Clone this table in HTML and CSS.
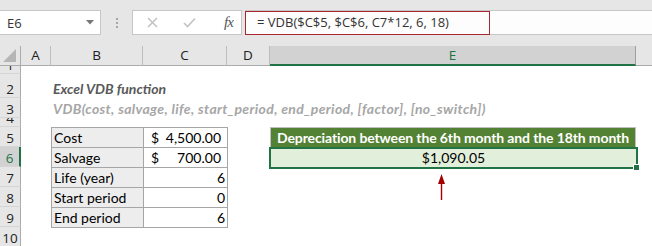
FILE: index.html
```html
<!DOCTYPE html>
<html lang="en">

<head>
    <meta charset="UTF-8" />
    <title>Excel VDB function</title>
    <link rel="stylesheet" href="styles.css">
</head>

<body>
    <div class="formula-bar">
        <div class="name-box">
            <span>E6</span>
            <svg class="caret" width="8" height="5" viewBox="0 0 8 5"><polygon points="0,0 8,0 4,4.5" /></svg>
        </div>
        <div class="grip"><i></i><i></i><i></i></div>
        <div class="fx-buttons">
            <svg class="btn-cancel" width="11" height="11" viewBox="0 0 11 11">
                <path d="M1 1 L10 10 M10 1 L1 10" />
            </svg>
            <svg class="btn-enter" width="13" height="11" viewBox="0 0 13 11">
                <path d="M1 6 L4.5 9.5 L12 1.5" />
            </svg>
            <span class="btn-fx">fx</span>
        </div>
        <div class="formula">
            <div class="formula-input">= VDB($C$5, $C$6, C7*12, 6, 18)</div>
        </div>
    </div>

    <div class="sheet">
        <div class="corner">
            <svg width="13" height="13" viewBox="0 0 13 13"><polygon points="13,0 13,13 0,13" /></svg>
        </div>

        <div class="col-heads">
            <div class="ch ch-a">A</div>
            <div class="ch ch-b">B</div>
            <div class="ch ch-c">C</div>
            <div class="ch ch-d">D</div>
            <div class="ch ch-e active">E</div>
            <div class="ch ch-rest"></div>
        </div>

        <div class="row-heads">
            <div class="rh h1">1</div>
            <div class="rh h2">2</div>
            <div class="rh">3</div>
            <div class="rh h4">4</div>
            <div class="rh">5</div>
            <div class="rh active">6</div>
            <div class="rh">7</div>
            <div class="rh">8</div>
            <div class="rh">9</div>
            <div class="rh">10</div>
        </div>

        <div class="cells">
            <div class="heading">Excel VDB function</div>
            <div class="syntax">VDB(cost, salvage, life, start_period, end_period, [factor], [no_switch])</div>

            <div class="inputs">
                <div class="label">Cost</div>
                <div class="money"><span>$</span><span>4,500.00</span></div>
                <div class="label">Salvage</div>
                <div class="money"><span>$</span><span>700.00</span></div>
                <div class="label">Life (year)</div>
                <div class="num">6</div>
                <div class="label">Start period</div>
                <div class="num">0</div>
                <div class="label">End period</div>
                <div class="num">6</div>
            </div>

            <div class="result-head">Depreciation between the 6th month and the 18th month</div>
            <div class="result-value">$1,090.05<span class="fill-handle"></span></div>

            <div class="pointer">
                <svg width="7" height="26" viewBox="0 0 7 26">
                    <polygon points="3.5,0 7,10 0,10" />
                    <rect x="2.8" y="9" width="1.4" height="17" />
                </svg>
            </div>
        </div>
    </div>
</body>

</html>
```

FILE: styles.css
```css
* {
margin: 0;
padding: 0;
box-sizing: border-box;
}

body {
width: 652px;
height: 246px;
overflow: hidden;
background: #fff;
font-family: "Open Sans", "Liberation Sans", sans-serif;
color: #222;
}

/* top bar: name box + formula */
.formula-bar {
display: flex;
align-items: flex-start;
height: 46px;
padding-top: 10px;
background: #e6e6e6;
}

.name-box {
display: flex;
align-items: center;
justify-content: space-between;
width: 101px;
height: 25px;
padding: 0 6px 0 7px;
background: #fff;
border: 1px solid #c6c6c6;
border-left: 0;
font-size: 13px;
color: #333;
}

.caret {
fill: #777;
}

.grip {
display: flex;
flex-direction: column;
align-items: center;
justify-content: center;
gap: 2px;
width: 31px;
height: 25px;
}

.grip i {
width: 2px;
height: 2px;
background: #a6a6a6;
}

.fx-buttons {
display: flex;
align-items: center;
width: 110px;
height: 25px;
padding-left: 14px;
background: #fff;
border: 1px solid #c6c6c6;
}

.fx-buttons svg {
fill: none;
stroke: #c3c3c3;
stroke-width: 1.6;
}

.btn-enter {
margin-left: 25px;
}

.btn-fx {
margin-left: 28px;
font-family: "Liberation Serif", serif;
font-style: italic;
font-size: 15px;
color: #555;
letter-spacing: -1px;
}

.formula {
flex: 1;
height: 25px;
margin-left: 3px;
background: #fdfdfd;
border-top: 1px solid #c6c6c6;
border-bottom: 1px solid #c6c6c6;
}

.formula-input {
width: 245px;
height: 24px;
padding-left: 11px;
line-height: 21px;
border: 1.5px solid #a8262d;
font-size: 13px;
color: #333;
}

/* worksheet */
.sheet {
display: grid;
grid-template-columns: 21px 1fr;
grid-template-rows: 20px 1fr;
}

.corner {
display: flex;
align-items: flex-end;
justify-content: flex-end;
padding: 0 4px 3px 0;
border-right: 1px solid #ababab;
border-bottom: 1px solid #ababab;
background: #e6e6e6;
}

.corner svg {
fill: #b5b5b5;
}

.col-heads {
display: flex;
background: #e6e6e6;
}

.ch {
height: 20px;
border-right: 1px solid #bdbdbd;
border-bottom: 1px solid #ababab;
text-align: center;
line-height: 19px;
font-size: 13.5px;
color: #222;
}

.ch-a { width: 30px; }
.ch-b { width: 92px; }
.ch-c { width: 84px; }
.ch-d { width: 43px; }
.ch-e { width: 366px; }

.ch-rest {
flex: 1;
border-right: 0;
}

.ch.active {
background: #d2d2d2;
color: #217346;
border-right-color: #9f9f9f;
border-bottom: 2px solid #217346;
}

.row-heads {
display: flex;
flex-direction: column;
background: #e6e6e6;
}

/* numbers sit on the bottom edge, like cell text */
.rh {
display: flex;
align-items: flex-end;
justify-content: center;
height: 20px;
overflow: hidden;
border-right: 1px solid #ababab;
border-bottom: 1px solid #d5d5d5;
font-size: 13.5px;
line-height: 15px;
color: #222;
}

.rh.h1 { height: 8px; }
.rh.h2 { height: 24px; }
.rh.h4 { height: 9px; }

.rh.active {
background: #d2d2d2;
color: #217346;
border-right: 2px solid #217346;
}

.cells {
display: grid;
grid-template-columns: 30px 92px 84px 43px 366px 1fr;
grid-template-rows: 8px 24px 20px 9px repeat(6, 20px);
font-family: "Lato", "Liberation Sans", sans-serif;
font-size: 14px;
color: #000;
}

.heading,
.syntax {
grid-column: 2 / 7;
align-self: end;
padding-left: 2px;
font-weight: 700;
font-style: italic;
white-space: nowrap;
line-height: 19px;
}

.heading {
grid-row: 2;
color: #595959;
}

.syntax {
grid-row: 3;
color: #a6a6a6;
letter-spacing: 0.35px;
}

/* input table B5:C9 */
.inputs {
grid-row: 5 / 10;
grid-column: 2 / 4;
display: grid;
grid-template-columns: 91px 83px;
grid-auto-rows: 19px;
gap: 1px;
width: 177px;
height: 101px;
border: 1px solid #a6a6a6;
background: #a6a6a6;
line-height: 19px;
}

.label {
padding-left: 2px;
background: #ededed;
}

.money,
.num {
background: #fff;
}

.money {
display: flex;
justify-content: space-between;
padding: 0 6px 0 7px;
}

.num {
padding-right: 2px;
text-align: right;
}

/* result E5:E6 */
.result-head {
grid-row: 5;
grid-column: 5;
border: 1px solid #bfbfbf;
border-bottom: 0;
background: #548235;
color: #fff;
font-weight: 700;
text-align: center;
line-height: 19px;
white-space: nowrap;
letter-spacing: -0.12px;
}

.result-value {
grid-row: 6;
grid-column: 5;
position: relative;
margin: 0 -2px -2px -1px;
border: 2px solid #217346;
background: #e2efda;
text-align: center;
line-height: 18px;
}

.fill-handle {
position: absolute;
right: -4px;
bottom: -4px;
width: 7px;
height: 7px;
background: #217346;
border: 1px solid #fff;
}

.pointer {
grid-row: 7 / 9;
grid-column: 5;
padding: 7px 0 0 168px;
}

.pointer svg {
display: block;
fill: #a50000;
}
```
